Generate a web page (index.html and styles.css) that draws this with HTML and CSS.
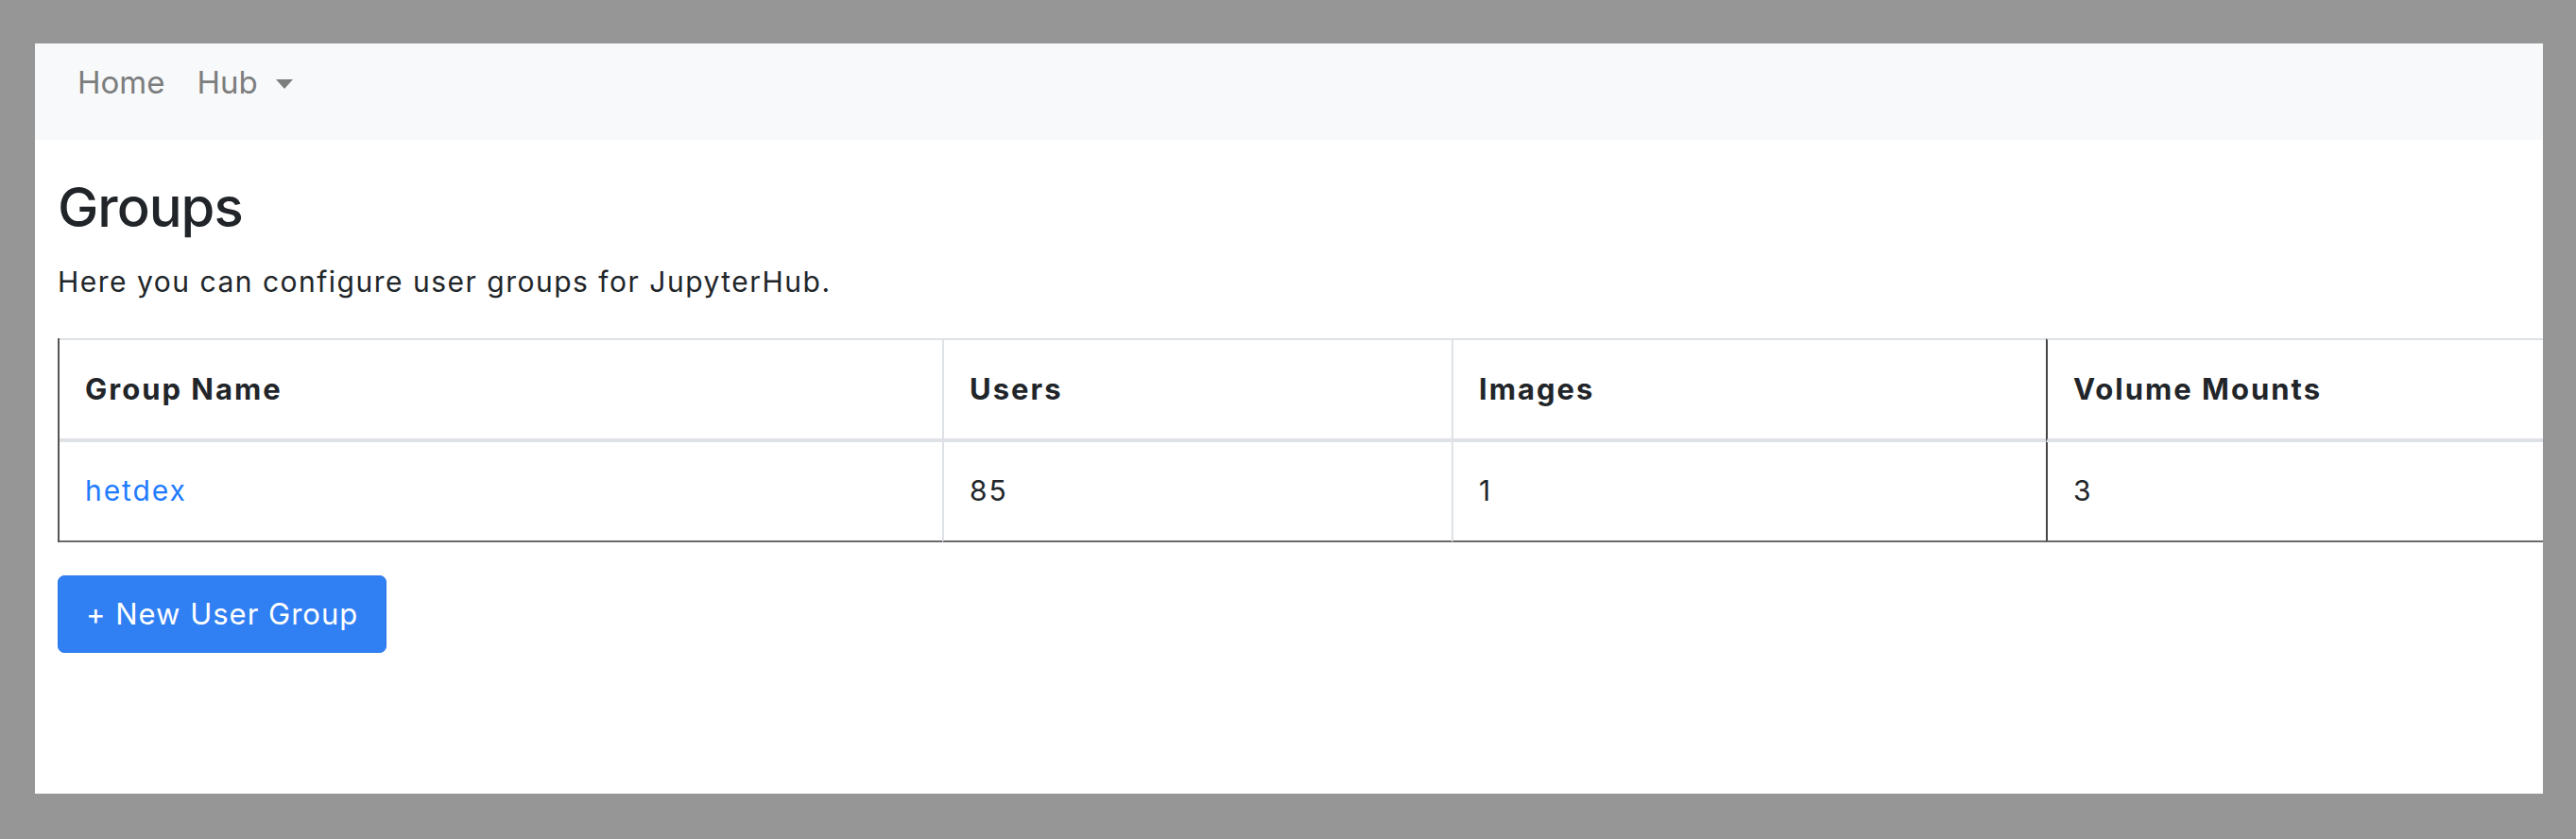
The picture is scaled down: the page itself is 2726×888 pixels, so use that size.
FILE: index.html
```html
<!DOCTYPE html>
<html lang="en">
<head>
<meta charset="utf-8">
<title>Groups</title>
<link rel="stylesheet" href="styles.css">
</head>
<body>
<div class="window">
  <nav class="navbar">
    <a class="nav-link" href="#">Home</a>
    <a class="nav-link dropdown-toggle" href="#">Hub</a>
  </nav>
  <main class="content">
    <h1 class="title">Groups</h1>
    <p class="lead">Here you can configure user groups for JupyterHub.</p>
    <table class="groups">
      <colgroup>
        <col class="c1"><col class="c2"><col class="c3"><col class="c4">
      </colgroup>
      <thead>
        <tr><th>Group Name</th><th>Users</th><th>Images</th><th>Volume Mounts</th></tr>
      </thead>
      <tbody>
        <tr><td><a class="link" href="#">hetdex</a></td><td>85</td><td>1</td><td>3</td></tr>
      </tbody>
    </table>
    <button class="btn-primary" type="button">+ New User Group</button>
  </main>
</div>
</body>
</html>
```
FILE: styles.css
```css
html, body {
  margin: 0;
  padding: 0;
}
body {
  background: #969696;
  font-family: Inter, "Liberation Sans", sans-serif;
  color: #212529;
}
.window {
  margin: 46px 0 0 37px;
  width: 2654px;
  height: 794px;
  background: #ffffff;
  overflow: hidden;
}
.navbar {
  box-sizing: border-box;
  height: 102px;
  background: #f8f9fa;
  display: flex;
  align-items: flex-start;
  gap: 34px;
  padding: 17px 0 0 45px;
}
.nav-link {
  font-size: 33px;
  line-height: 1.5;
  color: #7c7d7d;
  text-decoration: none;
  display: flex;
  align-items: center;
}
.dropdown-toggle::after {
  content: "";
  display: inline-block;
  margin-left: 19px;
  margin-top: 2px;
  border-top: 10px solid #7c7d7d;
  border-left: 9px solid transparent;
  border-right: 9px solid transparent;
}
.content {
  padding: 0 0 0 24px;
}
.title {
  margin: 36px 0 20px;
  font-size: 58px;
  font-weight: 500;
  line-height: 1.24;
  letter-spacing: -1px;
}
.lead {
  margin: 0 0 37px;
  font-size: 30px;
  line-height: 1.5;
  letter-spacing: 1.5px;
}
.groups {
  border-spacing: 0;
  table-layout: fixed;
  width: 2664px;
  border-left: 2px solid #555555;
  font-size: 30px;
  line-height: 1.5;
}
.c1 { width: 934px; }
.c2 { width: 539px; }
.c3 { width: 629px; }
.c4 { width: 560px; }
.groups th,
.groups td {
  box-sizing: border-box;
  text-align: left;
  vertical-align: middle;
  padding: 0 27px;
}
.groups th {
  height: 110px;
  font-weight: 700;
  font-size: 31px;
  letter-spacing: 2px;
  border-top: 2px solid #dee2e6;
  border-bottom: 4px solid #dee2e6;
}
.groups td {
  height: 106px;
  letter-spacing: 1.9px;
  border-bottom: 2px solid #6a6a6a;
}
.groups th + th,
.groups td + td {
  border-left: 2px solid #dee2e6;
}
.groups th:nth-child(4),
.groups td:nth-child(4) {
  border-left-color: #444444;
}
.link {
  color: #1f7bff;
  text-decoration: none;
}
.btn-primary {
  margin-top: 35px;
  box-sizing: border-box;
  height: 82px;
  padding: 0 29px;
  font-family: Inter, "Liberation Sans", sans-serif;
  font-size: 31px;
  line-height: 1.5;
  letter-spacing: 1px;
  color: #ffffff;
  background: #3080f4;
  border: 1px solid #2b78ea;
  border-radius: 7px;
}
```
